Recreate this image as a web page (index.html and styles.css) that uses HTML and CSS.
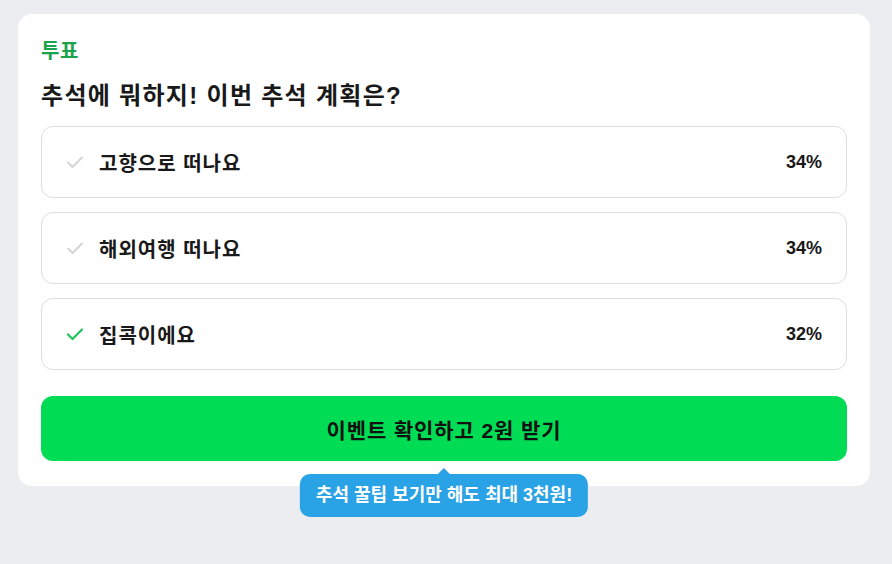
FILE: index.html
```html
<!DOCTYPE html>
<html lang="ko">
<head>
<meta charset="utf-8">
<link rel="stylesheet" href="styles.css">
</head>
<body>
<div class="card">
  <div class="label">투표</div>
  <h1 class="title">추석에 뭐하지! 이번 추석 계획은?</h1>
  <ul class="options">
    <li class="option">
      <svg class="check" viewBox="0 0 18 14" width="18" height="14"><path d="M2 7.5 L6.5 12 L16 2.5" fill="none" stroke="currentColor" stroke-width="1.8" stroke-linecap="round" stroke-linejoin="round"/></svg>
      <span class="opt-text">고향으로 떠나요</span>
      <span class="pct">34%</span>
    </li>
    <li class="option">
      <svg class="check" viewBox="0 0 18 14" width="18" height="14"><path d="M2 7.5 L6.5 12 L16 2.5" fill="none" stroke="currentColor" stroke-width="1.8" stroke-linecap="round" stroke-linejoin="round"/></svg>
      <span class="opt-text">해외여행 떠나요</span>
      <span class="pct">34%</span>
    </li>
    <li class="option selected">
      <svg class="check" viewBox="0 0 18 14" width="18" height="14"><path d="M2 7.5 L6.5 12 L16 2.5" fill="none" stroke="currentColor" stroke-width="2.2" stroke-linecap="round" stroke-linejoin="round"/></svg>
      <span class="opt-text">집콕이에요</span>
      <span class="pct">32%</span>
    </li>
  </ul>
  <div class="cta-wrap">
    <button class="cta">이벤트 확인하고 2원 받기</button>
    <div class="tooltip">추석 꿀팁 보기만 해도 최대 3천원!</div>
  </div>
</div>
</body>
</html>
```

FILE: styles.css
```css
* { box-sizing: border-box; }
html, body { margin: 0; padding: 0; }
body {
  background: #ecedf1;
  font-family: "Liberation Sans", "Noto Sans CJK KR", sans-serif;
  padding: 14px 22px 0 18px;
  height: 564px;
}
.card {
  background: #ffffff;
  border-radius: 14px;
  padding: 26px 23px 25px 23px;
}
.label {
  color: #1aa34a;
  font-size: 20px;
  font-weight: 700;
  letter-spacing: 0.5px;
  line-height: 22px;
}
.title {
  margin: 19px 0 15px 0;
  font-size: 24px;
  font-weight: 700;
  letter-spacing: 1.3px;
  line-height: 30px;
  color: #191919;
}
.options {
  list-style: none;
  margin: 0;
  padding: 0;
  display: flex;
  flex-direction: column;
  gap: 14px;
}
.option {
  height: 72px;
  border: 1px solid #dddddd;
  border-radius: 12px;
  display: flex;
  align-items: center;
  padding: 0 24px 0 24px;
  gap: 15px;
}
.check {
  color: #d2d2d2;
  flex: none;
}
.option.selected .check { color: #1fc45c; }
.opt-text {
  flex: 1;
  font-size: 20px;
  font-weight: 700;
  letter-spacing: 1px;
  color: #191919;
}
.pct {
  font-size: 18px;
  font-weight: 700;
  color: #191919;
}
.cta-wrap {
  position: relative;
  margin-top: 26px;
}
.cta {
  display: block;
  width: 100%;
  height: 65px;
  border: none;
  border-radius: 12px;
  background: #00dd55;
  color: #111111;
  font-family: inherit;
  font-size: 21px;
  font-weight: 700;
  letter-spacing: 0.9px;
}
.tooltip {
  position: absolute;
  left: 50%;
  transform: translateX(-50%);
  top: 78px;
  height: 43px;
  padding: 0 16px;
  background: #2aa2e6;
  color: #ffffff;
  border-radius: 10px;
  font-size: 18px;
  font-weight: 700;
  line-height: 43px;
  white-space: nowrap;
}
.tooltip::before {
  content: "";
  position: absolute;
  left: 50%;
  top: -6px;
  margin-left: -7px;
  width: 0;
  height: 0;
  border-left: 7px solid transparent;
  border-right: 7px solid transparent;
  border-bottom: 7px solid #2aa2e6;
}
```
